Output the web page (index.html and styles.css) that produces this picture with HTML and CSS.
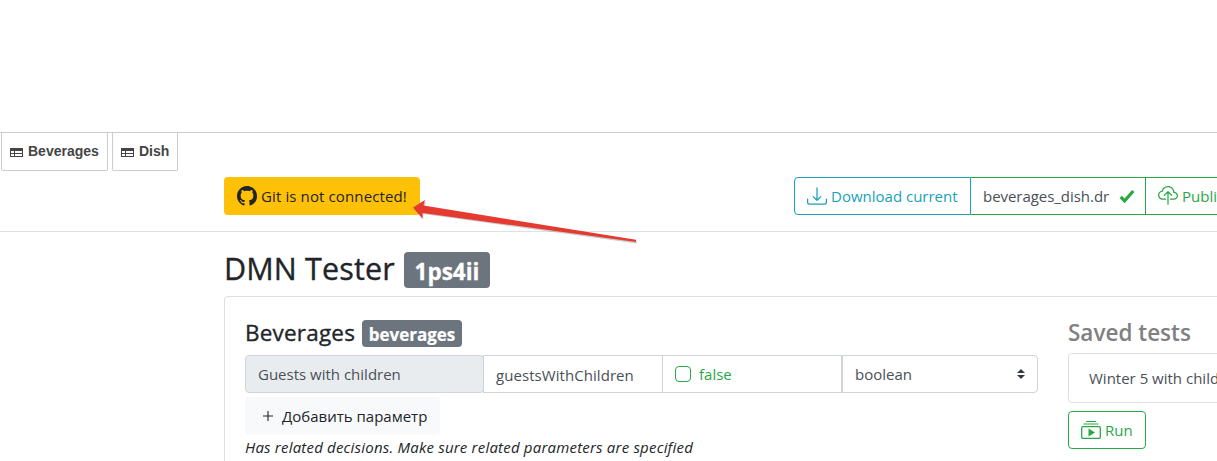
FILE: index.html
```html
<!DOCTYPE html>
<html lang="en">
<head>
<meta charset="utf-8">
<title>DMN Tester</title>
<link rel="stylesheet" href="styles.css">
</head>
<body>
<div class="canvas"></div>
<nav class="tabs">
  <a class="tab"><svg class="tab-icon" width="13" height="9" viewBox="0 0 13 9"><path fill="#444" fill-rule="evenodd" d="M0 0h13v9H0zM1 3v2h3V3zm4 0v2h7V3zM1 6v2h3V6zm4 0v2h7V6z"/></svg><span>Beverages</span></a>
  <a class="tab"><svg class="tab-icon" width="13" height="9" viewBox="0 0 13 9"><path fill="#444" fill-rule="evenodd" d="M0 0h13v9H0zM1 3v2h3V3zm4 0v2h7V3zM1 6v2h3V6zm4 0v2h7V6z"/></svg><span>Dish</span></a>
</nav>
<header class="toolbar">
  <button class="btn git"><svg width="20" height="20" viewBox="0 0 16 16"><path fill="currentColor" d="M8 0C3.58 0 0 3.58 0 8c0 3.54 2.29 6.53 5.47 7.59.4.07.55-.17.55-.38 0-.19-.01-.82-.01-1.49-2.01.37-2.53-.49-2.69-.94-.09-.23-.48-.94-.82-1.13-.28-.15-.68-.52-.01-.53.63-.01 1.08.58 1.23.82.72 1.21 1.87.87 2.33.66.07-.52.28-.87.51-1.07-1.78-.2-3.64-.89-3.64-3.95 0-.87.31-1.59.82-2.15-.08-.2-.36-1.02.08-2.12 0 0 .67-.21 2.2.82.64-.18 1.32-.27 2-.27s1.36.09 2 .27c1.53-1.04 2.2-.82 2.2-.82.44 1.1.16 1.92.08 2.12.51.56.82 1.27.82 2.15 0 3.07-1.87 3.75-3.65 3.95.29.25.54.73.54 1.48 0 1.07-.01 1.93-.01 2.2 0 .21.15.46.55.38A8.01 8.01 0 0 0 16 8c0-4.42-3.58-8-8-8z"/></svg><span class="git-label">Git is not connected!</span></button>
  <div class="group">
    <button class="btn download"><svg width="20" height="20" viewBox="0 0 16 16" fill="currentColor"><path d="M.5 9.9a.5.5 0 0 1 .5.5v2.5a1 1 0 0 0 1 1h12a1 1 0 0 0 1-1v-2.5a.5.5 0 0 1 1 0v2.5a2 2 0 0 1-2 2H2a2 2 0 0 1-2-2v-2.5a.5.5 0 0 1 .5-.5z"/><path d="M7.646 11.854a.5.5 0 0 0 .708 0l3-3a.5.5 0 0 0-.708-.708L8.500 10.293V1.500a.5.5 0 0 0-1 0v8.793L5.354 8.146a.5.5 0 1 0-.708.708z"/></svg><span>Download current</span></button>
    <div class="file"><span class="file-name">beverages_dish.dr</span><svg width="16" height="16" viewBox="0 0 16 16"><path d="M1.700 8.800 5.600 12.800 14.300 3" fill="none" stroke="#28a745" stroke-width="3.200"/></svg></div>
    <button class="btn publish"><svg width="20" height="20" viewBox="0 0 16 16" fill="currentColor"><path fill-rule="evenodd" d="M4.406 1.342A5.530 5.530 0 0 1 8 0c2.690 0 4.923 2 5.166 4.579C14.758 4.804 16 6.137 16 7.773 16 9.569 14.502 11 12.687 11H10a.5.5 0 0 1 0-1h2.688C13.979 10 15 8.988 15 7.773c0-1.216-1.020-2.228-2.313-2.228h-.5v-.5C12.188 2.825 10.328 1 8 1a4.530 4.530 0 0 0-2.941 1.100c-.757.652-1.153 1.438-1.153 2.055v.448l-.445.049C2.064 4.805 1 5.952 1 7.318 1 8.785 2.230 10 3.781 10H6a.5.5 0 0 1 0 1H3.781C1.708 11 0 9.366 0 7.318c0-1.763 1.266-3.223 2.942-3.593.143-.863.698-1.723 1.464-2.383z"/><path fill-rule="evenodd" d="M7.646 4.146a.5.5 0 0 1 .708 0l3 3a.5.5 0 0 1-.708.708L8.500 5.707V14.500a.5.5 0 0 1-1 0V5.707L5.354 7.854a.5.5 0 1 1-.708-.708z"/></svg><span>Publish</span></button>
  </div>
</header>
<svg class="arrow" width="230" height="50" viewBox="0 0 230 50"><path class="arrow-shadow" d="M0 7.500 12 0 10.500 5.500 223 40.500V42L9.500 12.500 9 18z" transform="translate(1 1.500)"/><path fill="#e53a2f" d="M0 7.500 12 0 10.500 5.500 223 39.800V42L9.500 13 9.500 18.500z"/></svg>
<main class="content">
  <h1 class="title"><span class="title-text">DMN Tester</span><span class="badge badge-id">1ps4ii</span></h1>
  <section class="card">
    <div class="params">
      <h2 class="subtitle"><span class="sub-text">Beverages</span><span class="badge badge-key">beverages</span></h2>
      <div class="inputs">
        <div class="cell label-cell"><span>Guests with children</span></div>
        <div class="cell name-cell"><span>guestsWithChildren</span></div>
        <div class="cell value-cell"><i class="check"></i><span>false</span></div>
        <div class="cell type-cell"><span>boolean</span><svg width="8" height="10" viewBox="0 0 8 10"><path fill="#343a40" d="M4 0 0 4h8zM0 6l4 4 4-4z"/></svg></div>
      </div>
      <button class="btn add"><svg width="12" height="12" viewBox="0 0 12 12"><path d="M6 1v10M1 6h10" stroke="#212529" stroke-width="1.100"/></svg><span>Добавить параметр</span></button>
      <p class="note"><em>Has related decisions. Make sure related parameters are specified</em></p>
    </div>
    <aside class="saved">
      <h2 class="subtitle saved-title"><span>Saved tests</span></h2>
      <div class="test"><span>Winter 5 with children</span></div>
      <button class="btn run"><svg width="20" height="20" viewBox="0 0 20 20" fill="none" stroke="currentColor"><path d="M5 1.500h10M2.500 4h15" stroke-width="1.200"/><rect x=".7" y="6.600" width="18.600" height="11.800" rx="1.300" stroke-width="1.300"/><path d="M7.500 8.500v8l6.500-4z" fill="currentColor" stroke="none"/></svg><span>Run</span></button>
    </aside>
  </section>
</main>
</body>
</html>
```
FILE: styles.css
```css
* { box-sizing: border-box; }
html, body { height: 100%; overflow: hidden; }
body { margin: 0; background: #fff; color: #212529; font: 15px/24px "Segoe UI", "Open Sans", sans-serif; }
h1, h2, p { margin: 0; }
span { white-space: nowrap; }
svg { flex: none; display: block; }
.canvas { height: 133px; border-bottom: 1px solid #ccc; }
.tabs { display: flex; gap: 4px; height: 38px; padding-left: 1px; font: bold 14px/16px "Liberation Sans", Arial, sans-serif; color: #444; }
.tab { display: flex; gap: 5px; height: 38px; padding: 0 8px 1px 9px; align-items: center; border: 1px solid #ccc; border-top: 0; border-radius: 0 0 2px 2px; }
.tab:first-child { width: 107px; }
.tab:last-child { width: 66px; }
.tab { padding-left: 8px; }
.tab-icon { margin-top: 2px; }
.toolbar { display: flex; height: 61px; padding: 6px 0 0 224px; border-bottom: 1px solid #dee2e6; }
.btn { display: flex; align-items: center; height: 38px; padding: 0 12px; gap: 4px; border: 1px solid transparent; border-radius: 4px; background: none; color: inherit; font: inherit; flex: none; }
.git { width: 196px; background: #ffc107; color: #212529; }
.git-label { letter-spacing: .12px; }
.group { display: flex; margin-left: 374px; flex: none; }
.download { width: 177px; border-color: #17a2b8; color: #17a2b8; border-radius: 4px 0 0 4px; }
.file { display: flex; align-items: center; justify-content: space-between; width: 174px; height: 38px; padding: 0 10px 0 12px; border: solid #28a745; border-width: 1px 0; color: #495057; }
.file-name { letter-spacing: -.04px; }
.publish { width: 100px; border-color: #28a745; color: #28a745; border-radius: 0; }
.arrow { position: absolute; left: 413px; top: 200px; }
.arrow-shadow { fill: #777; opacity: .4; }
.content { padding: 20px 0 0 224px; }
.title { display: flex; height: 44px; gap: 9px; font-size: 30.5px; line-height: 32px; font-weight: 500; }
.title-text { width: 171px; letter-spacing: .15px; -webkit-text-stroke: .35px currentColor; }
.badge { display: flex; align-items: center; justify-content: center; color: #fff; background: #6c757d; border-radius: 4px; font-weight: 700; }
.badge-id { width: 86px; height: 36px; font-size: 22.5px; padding-top: 3px; -webkit-text-stroke: .3px currentColor; }
.card { display: flex; gap: 30px; width: 1100px; height: 400px; padding: 23px 20px; border: 1px solid #dfdfdf; border-radius: 4px; }
.params { width: 793px; flex: none; }
.subtitle { display: flex; height: 35px; gap: 7px; font-size: 22.5px; line-height: 25px; font-weight: 500; }
.sub-text { width: 110px; letter-spacing: .2px; -webkit-text-stroke: .35px currentColor; }
.badge-key { width: 100px; height: 27px; font-size: 17px; padding-top: 2px; -webkit-text-stroke: .2px currentColor; }
.inputs { display: flex; color: #495057; }
.cell { display: flex; align-items: center; height: 38px; padding: 0 12px; border: 1px solid #ced4da; }
.label-cell { width: 239px; background: #e9ecef; border-radius: 4px; }
.name-cell { width: 180px; margin-left: -1px; padding-top: 1px; letter-spacing: .06px; }
.value-cell { width: 180px; margin-left: -1px; gap: 8px; color: #28a745; }
.check { width: 16px; height: 16px; border: 1px solid #28a745; border-radius: 4px; }
.type-cell { width: 196px; justify-content: space-between; border-radius: 0 4px 4px 0; }
.add { width: 195px; margin-top: 4px; padding-left: 16px; gap: 8px; background: #f8f9fa; }
.note { height: 24px; letter-spacing: .2px; }
.saved { width: 300px; flex: none; }
.saved-title { height: 33px; color: #808080; font-weight: 600; }
.test { display: flex; align-items: center; height: 50px; padding: 0 20px; border: 1px solid #dfdfdf; border-radius: 4px; color: #495057; }
.run { width: 78px; margin-top: 8px; color: #28a745; border-color: #28a745; }
```
